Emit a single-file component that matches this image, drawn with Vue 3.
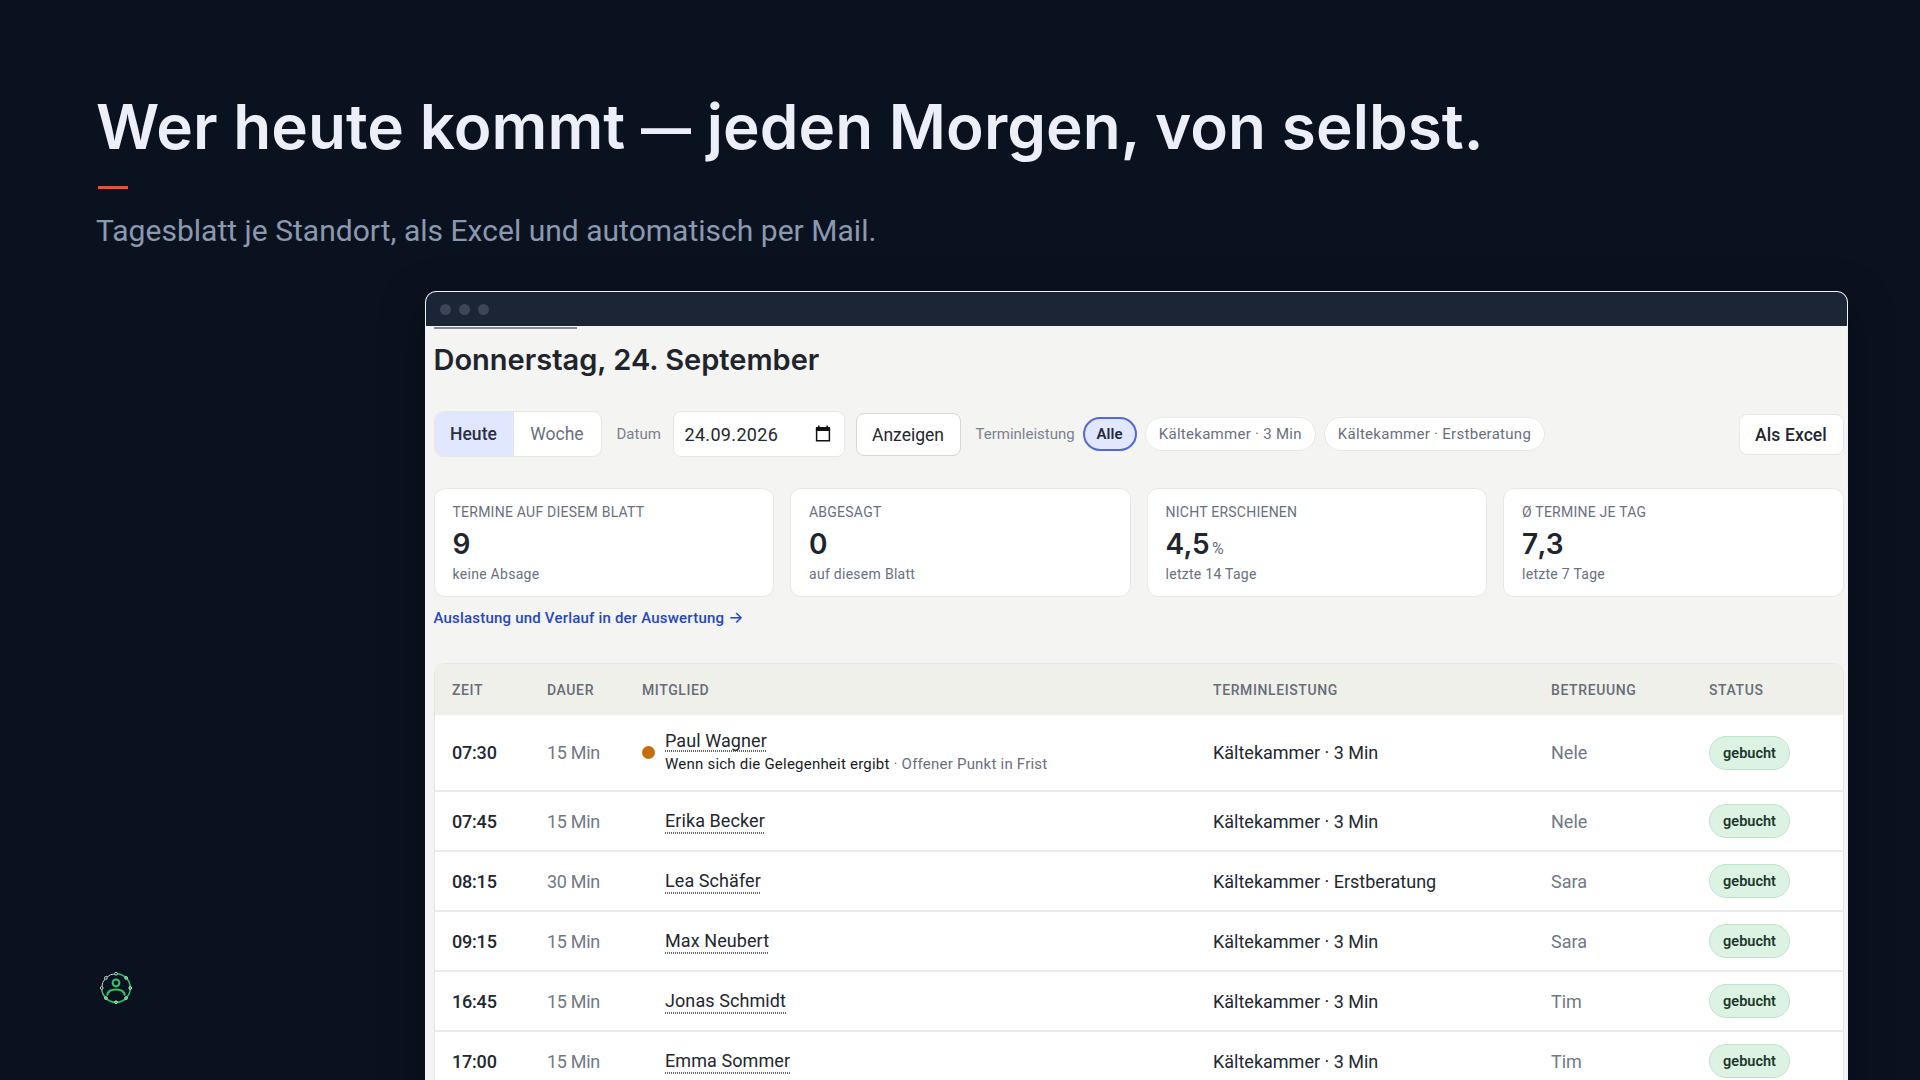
<script setup>
const chips = ['Kältekammer · 3 Min', 'Kältekammer · Erstberatung']

const stats = [
  { label: 'Termine auf diesem Blatt', value: '9', note: 'keine Absage' },
  { label: 'Abgesagt', value: '0', note: 'auf diesem Blatt' },
  { label: 'Nicht erschienen', value: '4,5', unit: '%', note: 'letzte 14 Tage' },
  { label: 'Ø Termine je Tag', value: '7,3', note: 'letzte 7 Tage' },
]

const columns = ['Zeit', 'Dauer', 'Mitglied', 'Terminleistung', 'Betreuung', 'Status']

const rows = [
  { time: '07:30', duration: '15 Min', name: 'Paul Wagner', hint: 'Wenn sich die Gelegenheit ergibt', detail: ' · Offener Punkt in Frist', service: 'Kältekammer · 3 Min', staff: 'Nele' },
  { time: '07:45', duration: '15 Min', name: 'Erika Becker', service: 'Kältekammer · 3 Min', staff: 'Nele' },
  { time: '08:15', duration: '30 Min', name: 'Lea Schäfer', service: 'Kältekammer · Erstberatung', staff: 'Sara' },
  { time: '09:15', duration: '15 Min', name: 'Max Neubert', service: 'Kältekammer · 3 Min', staff: 'Sara' },
  { time: '16:45', duration: '15 Min', name: 'Jonas Schmidt', service: 'Kältekammer · 3 Min', staff: 'Tim' },
  { time: '17:00', duration: '15 Min', name: 'Emma Sommer', service: 'Kältekammer · 3 Min', staff: 'Tim' },
]

const nodes = [
  [16, 1.7], [26.1, 5.9], [30.3, 16], [26.1, 26.1],
  [16, 30.3], [5.9, 26.1], [1.7, 16], [5.9, 5.9],
]
</script>

<template>
  <main class="slide">
    <header class="intro">
      <h1>Wer heute kommt <span class="dash">—</span> jeden Morgen, von selbst.</h1>
      <div class="accent"></div>
      <p>Tagesblatt je Standort, als Excel und automatisch per Mail.</p>
    </header>

    <section class="window">
      <div class="titlebar"><i></i><i></i><i></i></div>
      <div class="page">
        <div class="rule"></div>
        <h2>Donnerstag, 24. September</h2>

        <div class="toolbar">
          <div class="segmented">
            <span class="seg active">Heute</span>
            <span class="seg">Woche</span>
          </div>
          <span class="caption">Datum</span>
          <div class="date">
            <span>24.09.2026</span>
            <svg width="16" height="18" viewBox="0 0 16 18">
              <path d="M1.6 4.4h12.8v11.4H1.6z" fill="none" stroke="#111" stroke-width="1.5" />
              <path d="M.9 2h14.2v4H.9zM3 .4h1.6V3H3zM11.4.4H13V3h-1.6z" fill="#111" />
            </svg>
          </div>
          <span class="button show">Anzeigen</span>
          <span class="caption service">Terminleistung</span>
          <div class="chips">
            <span class="chip selected">Alle</span>
            <span v-for="c in chips" :key="c" class="chip">{{ c }}</span>
          </div>
          <span class="button export">Als Excel</span>
        </div>

        <div class="stats">
          <article v-for="s in stats" :key="s.label" class="stat">
            <div class="label">{{ s.label }}</div>
            <div class="value">{{ s.value }}<small v-if="s.unit">{{ s.unit }}</small></div>
            <div class="note">{{ s.note }}</div>
          </article>
        </div>
        <a class="link">Auslastung und Verlauf in der Auswertung <span>→</span></a>

        <div class="table">
          <div class="row head">
            <span v-for="c in columns" :key="c">{{ c }}</span>
          </div>
          <div v-for="r in rows" :key="r.time" class="row" :class="{ tall: r.hint }">
            <span class="time">{{ r.time }}</span>
            <span class="muted">{{ r.duration }}</span>
            <div class="member">
              <i class="dot" :class="{ open: r.hint }"></i>
              <div>
                <span class="name">{{ r.name }}</span>
                <div v-if="r.hint" class="hint"><b>{{ r.hint }}</b>{{ r.detail }}</div>
              </div>
            </div>
            <span>{{ r.service }}</span>
            <span class="muted staff">{{ r.staff }}</span>
            <span class="badge">gebucht</span>
          </div>
        </div>
      </div>
    </section>

    <svg class="logo" width="32" height="32" viewBox="0 0 32 32" fill="none">
      <path d="M1.7 16A14.3 14.3 0 0 1 16 1.7" stroke="#c3cbd3" stroke-width="1" />
      <path d="M16 1.7A14.3 14.3 0 1 1 1.7 16" stroke="#2bc46c" stroke-width="1.5" />
      <circle v-for="(n, i) in nodes" :key="i" :cx="n[0]" :cy="n[1]" r="1.4" :fill="i > 5 || i === 0 ? '#0b121f' : '#39a869'" stroke="#c9ead8" stroke-width=".9" />
      <circle cx="16" cy="10.8" r="3.4" stroke="#2fc76e" stroke-width="2" />
      <path d="M7.3 22.8c.5-3.500 4-5.300 8.700-5.300s8.200 1.800 8.700 5.300" stroke="#2fc76e" stroke-width="2.100" stroke-linecap="round" />
    </svg>
  </main>
</template>

<style>
body {
  margin: 0;
  overflow: hidden;
  background: #0b121f;
}
</style>

<style scoped>
.slide {
  position: relative;
  box-sizing: border-box;
  width: 1920px;
  height: 1080px;
  overflow: hidden;
  padding: 88px 72px 0 97px;
  background: #0b121f;
  font-family: Roboto, sans-serif;
  color: #23272f;
}
.intro {
  height: 203px;
}
h1 {
  margin: 0 0 0 -1px;
  font: 600 62px/77px Inter, sans-serif;
  letter-spacing: 0.06px;
  color: #eceff8;
  white-space: nowrap;
}
.dash {
  font-size: 50px;
  font-weight: 700;
  line-height: 0;
  vertical-align: 3px;
}
.accent {
  width: 30px;
  height: 3px;
  margin: 21px 0 0 1px;
  background: #d9583c;
}
.intro p {
  margin: 24px 0 0 -1px;
  font-size: 30px;
  line-height: 36px;
  letter-spacing: 0.02px;
  color: #8b99b0;
}
.window {
  box-sizing: border-box;
  width: 1423px;
  height: 860px;
  margin-left: 328px;
  overflow: hidden;
  border: 1px solid #f0f2f5;
  border-radius: 11px 11px 0 0;
  background: #f4f4f2;
  box-shadow: 0 14px 40px 4px rgba(3, 6, 18, 0.4);
}
.titlebar {
  display: flex;
  align-items: center;
  gap: 8px;
  height: 34px;
  padding-left: 14px;
  background: #1c2535;
}
.titlebar i {
  width: 11px;
  height: 11px;
  border-radius: 50%;
  background: #3c4656;
}
.page {
  padding: 1px 3.5px 0 7.500px;
}
.rule {
  width: 143px;
  height: 2px;
  background: #858995;
}
h2 {
  margin: 12px 0 0;
  font: 600 29px/38px Inter, sans-serif;
  color: #20242c;
}
.toolbar {
  display: flex;
  align-items: center;
  height: 46px;
  margin-top: 32px;
  font-size: 17.5px;
}
.segmented {
  box-sizing: border-box;
  display: flex;
  width: 168px;
  height: 46px;
  overflow: hidden;
  border: 1px solid #e6e6e3;
  border-radius: 9px;
  background: #fff;
}
.seg {
  flex: 1;
  line-height: 45px;
  text-align: center;
  color: #69707d;
}
.seg.active {
  flex: 0 0 78px;
  border-right: 1px solid #dfe2ee;
  background: #e1e7ff;
  font-weight: 500;
  letter-spacing: 0.1px;
  color: #2b3040;
}
.caption {
  width: 56px;
  margin-left: 15px;
  font-size: 15px;
  color: #7b818c;
}
.date {
  box-sizing: border-box;
  display: flex;
  align-items: center;
  justify-content: space-between;
  width: 172px;
  height: 46px;
  padding: 0 13px 0 11px;
  border: 1px solid #e6e6e3;
  border-radius: 8px;
  background: #fff;
  font-size: 18px;
  letter-spacing: 0.32px;
}
.button {
  box-sizing: border-box;
  height: 43px;
  border: 1px solid #d6d6d2;
  border-radius: 8px;
  background: #fff;
  line-height: 42px;
  text-align: center;
}
.show {
  width: 105px;
  margin-left: 11px;
  letter-spacing: 0.02px;
}
.service {
  width: 107px;
}
.chips {
  display: flex;
  gap: 8px;
}
.chip {
  box-sizing: border-box;
  height: 34px;
  padding: 0 13px;
  border: 1px solid #e7e7e4;
  border-radius: 17px;
  background: #fff;
  font-size: 15px;
  line-height: 32px;
  letter-spacing: 0.28px;
  color: #69707d;
}
.chip.selected {
  border: 2px solid #5468cf;
  padding: 0 12px;
  background: #e1e7ff;
  font-weight: 600;
  line-height: 30px;
  letter-spacing: 0.1px;
  color: #23283a;
}
.export {
  width: 105px;
  height: 41px;
  margin-left: auto;
  border-color: #e6e6e3;
  font-weight: 500;
  line-height: 40px;
  letter-spacing: 0.1px;
}
.stats {
  display: grid;
  grid-template-columns: repeat(4, 1fr);
  gap: 16px;
  margin-top: 31px;
}
.stat {
  box-sizing: border-box;
  height: 109px;
  padding: 13px 18px 0;
  border: 1px solid #e7e7e4;
  border-radius: 11px;
  background: #fff;
  font-size: 14px;
  color: #69707d;
}
.label {
  line-height: 21px;
  letter-spacing: 0.24px;
  text-transform: uppercase;
}
.value {
  margin-top: 3px;
  font: 600 28px/36px Inter, sans-serif;
  font-kerning: none;
  letter-spacing: -0.6px;
  color: #20242c;
}
.value small {
  margin-left: 3px;
  font: 400 16px Roboto, sans-serif;
  color: #69707d;
}
.note {
  margin-top: 3px;
  line-height: 18px;
  letter-spacing: 0.28px;
}
.link {
  display: block;
  margin-top: 10px;
  font-size: 15px;
  font-weight: 500;
  line-height: 22px;
  letter-spacing: 0.2px;
  color: #2747bd;
}
.link span {
  font-family: Inter, sans-serif;
  font-size: 16px;
  line-height: 0;
}
.table {
  margin-top: 34px;
  overflow: hidden;
  border: 1px solid #e6e6e2;
  border-radius: 11px 11px 0 0;
  background: #fff;
}
.row {
  box-sizing: border-box;
  display: grid;
  grid-template-columns: 95px 95px 571px 338px 158px 81px;
  align-items: center;
  height: 60px;
  padding-left: 17.5px;
  border-top: 2px solid #ebebea;
  font-size: 18px;
}
.row.tall {
  height: 75px;
  border: 0;
}
.row.head {
  height: 51px;
  border: 0;
  background: #eff0ea;
  font-size: 14px;
  font-weight: 500;
  letter-spacing: 0.6px;
  text-transform: uppercase;
  color: #666d78;
}
.time {
  font-weight: 500;
  letter-spacing: -0.2px;
}
.muted {
  letter-spacing: -0.3px;
  color: #717884;
}
.staff {
  letter-spacing: 0;
}
.member {
  display: flex;
  align-items: center;
}
.dot {
  width: 13px;
  height: 13px;
  margin-right: 10px;
  border-radius: 50%;
}
.dot.open {
  background: #c3700c;
}
.name {
  display: inline-block;
  padding-bottom: 1px;
  background: repeating-linear-gradient(90deg, #60646b 0 1px, transparent 1px 2px) bottom / 100% 2px no-repeat;
  line-height: 24px;
  letter-spacing: 0.08px;
}
.tall .name {
  padding-bottom: 0;
  line-height: 22px;
}
.hint {
  font-size: 15px;
  line-height: 24px;
  letter-spacing: 0.22px;
  color: #69707d;
  white-space: pre-wrap;
}
.hint b {
  font-weight: 400;
  color: #181b22;
}
.badge {
  box-sizing: border-box;
  width: 81px;
  height: 34px;
  border: 1px solid #bfe3cd;
  border-radius: 17px;
  background: #dcf3e4;
  font-size: 14.5px;
  font-weight: 600;
  line-height: 33px;
  text-align: center;
  color: #20382c;
}
.logo {
  position: absolute;
  left: 100px;
  top: 972px;
}
</style>
